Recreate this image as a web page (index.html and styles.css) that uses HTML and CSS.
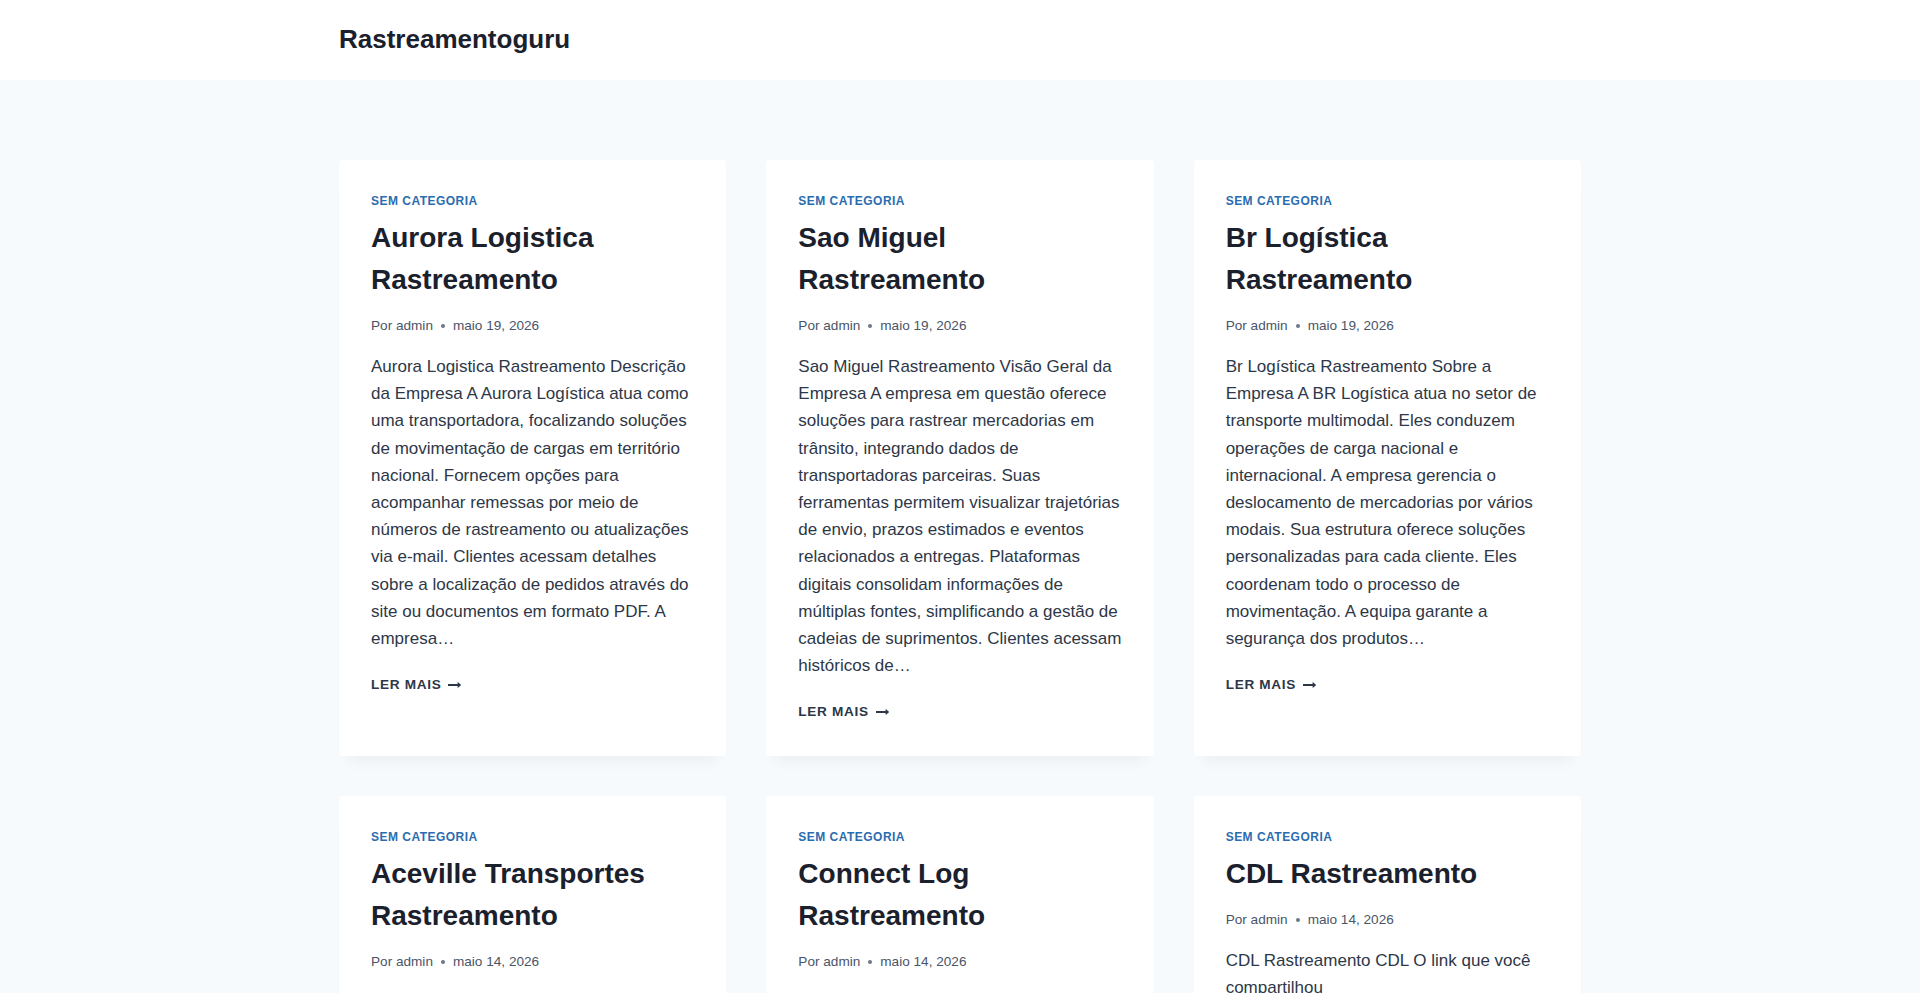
FILE: index.html
```html
<!DOCTYPE html>
<html lang="pt-BR">
<head>
<meta charset="utf-8">
<title>Rastreamentoguru</title>
<link rel="stylesheet" href="styles.css">
</head>
<body>
<header class="site-header">
  <div class="wrap header-inner">
    <a class="site-title" href="#">Rastreamentoguru</a>
  </div>
</header>
<main class="content-area">
  <div class="wrap">
    <div class="post-grid">
      <article class="card">
        <div class="tax"><a href="#">Sem categoria</a></div>
        <h2 class="entry-title"><a href="#">Aurora Logistica Rastreamento</a></h2>
        <div class="meta"><span>Por admin</span><span class="dot"></span><span>maio 19, 2026</span></div>
        <p class="excerpt">Aurora Logistica Rastreamento Descrição da Empresa A Aurora Logística atua como uma transportadora, focalizando soluções de movimentação de cargas em território nacional. Fornecem opções para acompanhar remessas por meio de números de rastreamento ou atualizações via e-mail. Clientes acessam detalhes sobre a localização de pedidos através do site ou documentos em formato PDF. A empresa…</p>
        <a class="more" href="#">Ler mais<svg class="arrow" viewBox="0 0 27 28" aria-hidden="true"><path d="M27 13.953c0 0.141-0.063 0.281-0.156 0.375l-6 5.531c-0.156 0.141-0.359 0.172-0.547 0.094-0.172-0.078-0.297-0.25-0.297-0.453v-3.5h-19.5c-0.281 0-0.5-0.219-0.5-0.5v-3c0-0.281 0.219-0.5 0.5-0.5h19.5v-3.5c0-0.203 0.109-0.375 0.297-0.453s0.391-0.047 0.547 0.078l6 5.469c0.094 0.094 0.156 0.219 0.156 0.359z"/></svg></a>
      </article>
      <article class="card">
        <div class="tax"><a href="#">Sem categoria</a></div>
        <h2 class="entry-title"><a href="#">Sao Miguel Rastreamento</a></h2>
        <div class="meta"><span>Por admin</span><span class="dot"></span><span>maio 19, 2026</span></div>
        <p class="excerpt">Sao Miguel Rastreamento Visão Geral da Empresa A empresa em questão oferece soluções para rastrear mercadorias em trânsito, integrando dados de transportadoras parceiras. Suas ferramentas permitem visualizar trajetórias de envio, prazos estimados e eventos relacionados a entregas. Plataformas digitais consolidam informações de múltiplas fontes, simplificando a gestão de cadeias de suprimentos. Clientes acessam históricos de…</p>
        <a class="more" href="#">Ler mais<svg class="arrow" viewBox="0 0 27 28" aria-hidden="true"><path d="M27 13.953c0 0.141-0.063 0.281-0.156 0.375l-6 5.531c-0.156 0.141-0.359 0.172-0.547 0.094-0.172-0.078-0.297-0.25-0.297-0.453v-3.5h-19.5c-0.281 0-0.5-0.219-0.5-0.5v-3c0-0.281 0.219-0.5 0.5-0.5h19.5v-3.5c0-0.203 0.109-0.375 0.297-0.453s0.391-0.047 0.547 0.078l6 5.469c0.094 0.094 0.156 0.219 0.156 0.359z"/></svg></a>
      </article>
      <article class="card">
        <div class="tax"><a href="#">Sem categoria</a></div>
        <h2 class="entry-title"><a href="#">Br Logística Rastreamento</a></h2>
        <div class="meta"><span>Por admin</span><span class="dot"></span><span>maio 19, 2026</span></div>
        <p class="excerpt">Br Logística Rastreamento Sobre a Empresa A BR Logística atua no setor de transporte multimodal. Eles conduzem operações de carga nacional e internacional. A empresa gerencia o deslocamento de mercadorias por vários modais. Sua estrutura oferece soluções personalizadas para cada cliente. Eles coordenam todo o processo de movimentação. A equipa garante a segurança dos produtos…</p>
        <a class="more" href="#">Ler mais<svg class="arrow" viewBox="0 0 27 28" aria-hidden="true"><path d="M27 13.953c0 0.141-0.063 0.281-0.156 0.375l-6 5.531c-0.156 0.141-0.359 0.172-0.547 0.094-0.172-0.078-0.297-0.25-0.297-0.453v-3.5h-19.5c-0.281 0-0.5-0.219-0.5-0.5v-3c0-0.281 0.219-0.5 0.5-0.5h19.5v-3.5c0-0.203 0.109-0.375 0.297-0.453s0.391-0.047 0.547 0.078l6 5.469c0.094 0.094 0.156 0.219 0.156 0.359z"/></svg></a>
      </article>
      <article class="card">
        <div class="tax"><a href="#">Sem categoria</a></div>
        <h2 class="entry-title"><a href="#">Aceville Transportes Rastreamento</a></h2>
        <div class="meta"><span>Por admin</span><span class="dot"></span><span>maio 14, 2026</span></div>
        <p class="excerpt">Aceville Transportes Rastreamento Sobre a Empresa A Aceville Transportes atua no transporte rodoviário de cargas, oferecendo acompanhamento de encomendas por meio de código de rastreio…</p>
        <a class="more" href="#">Ler mais<svg class="arrow" viewBox="0 0 27 28" aria-hidden="true"><path d="M27 13.953c0 0.141-0.063 0.281-0.156 0.375l-6 5.531c-0.156 0.141-0.359 0.172-0.547 0.094-0.172-0.078-0.297-0.25-0.297-0.453v-3.5h-19.5c-0.281 0-0.5-0.219-0.5-0.5v-3c0-0.281 0.219-0.5 0.5-0.5h19.5v-3.5c0-0.203 0.109-0.375 0.297-0.453s0.391-0.047 0.547 0.078l6 5.469c0.094 0.094 0.156 0.219 0.156 0.359z"/></svg></a>
      </article>
      <article class="card">
        <div class="tax"><a href="#">Sem categoria</a></div>
        <h2 class="entry-title"><a href="#">Connect Log Rastreamento</a></h2>
        <div class="meta"><span>Por admin</span><span class="dot"></span><span>maio 14, 2026</span></div>
        <p class="excerpt">Connect Log Rastreamento Visão Geral A Connect Log oferece serviços de logística e entrega, permitindo que clientes acompanhem seus pedidos em tempo real…</p>
        <a class="more" href="#">Ler mais<svg class="arrow" viewBox="0 0 27 28" aria-hidden="true"><path d="M27 13.953c0 0.141-0.063 0.281-0.156 0.375l-6 5.531c-0.156 0.141-0.359 0.172-0.547 0.094-0.172-0.078-0.297-0.25-0.297-0.453v-3.5h-19.5c-0.281 0-0.5-0.219-0.5-0.5v-3c0-0.281 0.219-0.5 0.5-0.5h19.5v-3.5c0-0.203 0.109-0.375 0.297-0.453s0.391-0.047 0.547 0.078l6 5.469c0.094 0.094 0.156 0.219 0.156 0.359z"/></svg></a>
      </article>
      <article class="card">
        <div class="tax"><a href="#">Sem categoria</a></div>
        <h2 class="entry-title"><a href="#">CDL Rastreamento</a></h2>
        <div class="meta"><span>Por admin</span><span class="dot"></span><span>maio 14, 2026</span></div>
        <p class="excerpt">CDL Rastreamento CDL O link que você compartilhou https://cdlrastreamento.com.br direciona para a página de rastreamento…</p>
        <a class="more" href="#">Ler mais<svg class="arrow" viewBox="0 0 27 28" aria-hidden="true"><path d="M27 13.953c0 0.141-0.063 0.281-0.156 0.375l-6 5.531c-0.156 0.141-0.359 0.172-0.547 0.094-0.172-0.078-0.297-0.25-0.297-0.453v-3.5h-19.5c-0.281 0-0.5-0.219-0.5-0.5v-3c0-0.281 0.219-0.5 0.5-0.5h19.5v-3.5c0-0.203 0.109-0.375 0.297-0.453s0.391-0.047 0.547 0.078l6 5.469c0.094 0.094 0.156 0.219 0.156 0.359z"/></svg></a>
      </article>
    </div>
  </div>
</main>
</body>
</html>
```
FILE: styles.css
```css
* { box-sizing: border-box; }
html, body { margin: 0; padding: 0; }
body {
  background: #f7fafc;
  font-family: "Liberation Sans", Arial, sans-serif;
  font-size: 17px;
  line-height: 1.6;
  color: #2d3748;
}
a { text-decoration: none; color: inherit; }

.wrap {
  max-width: 1290px;
  margin: 0 auto;
  padding: 0 24px;
}

.site-header {
  background: #ffffff;
}
.header-inner {
  height: 80px;
  display: flex;
  align-items: center;
}
.site-title {
  font-size: 26px;
  font-weight: 700;
  line-height: 1.2;
  color: #1a202c;
}

.content-area {
  padding-top: 80px;
  padding-bottom: 80px;
}

.post-grid {
  display: grid;
  grid-template-columns: repeat(3, minmax(0, 1fr));
  gap: 40px;
}

.card {
  background: #ffffff;
  border-radius: 4px;
  box-shadow: 0 15px 15px -10px rgba(0, 0, 0, 0.05);
  padding: 32px 32px 33px;
  display: flex;
  flex-direction: column;
  align-items: flex-start;
}

.tax {
  font-size: 12px;
  line-height: 1.6;
  font-weight: 700;
  text-transform: uppercase;
  letter-spacing: 0.04em;
  color: #2b6cb0;
  margin-bottom: 6px;
}

.entry-title {
  margin: 0;
  font-size: 28px;
  line-height: 1.5;
  font-weight: 700;
  color: #1a202c;
}

.meta {
  display: flex;
  align-items: center;
  font-size: 13.6px;
  line-height: 1.6;
  color: #4a5568;
  margin-top: 13.6px;
  margin-bottom: 16.5px;
}
.dot {
  display: inline-block;
  width: 4px;
  height: 4px;
  border-radius: 50%;
  background: currentColor;
  opacity: 0.8;
  margin: 0 8px;
}

.excerpt {
  margin: 0;
  font-size: 17px;
  line-height: 1.6;
  color: #2d3748;
}

.more {
  margin-top: 22px;
  display: inline-flex;
  align-items: center;
  font-size: 13.6px;
  line-height: 1.6;
  font-weight: 700;
  letter-spacing: 0.05em;
  text-transform: uppercase;
  color: #2d3748;
}
.arrow {
  width: 13px;
  height: 14px;
  margin-left: 6.8px;
  fill: currentColor;
}
```
